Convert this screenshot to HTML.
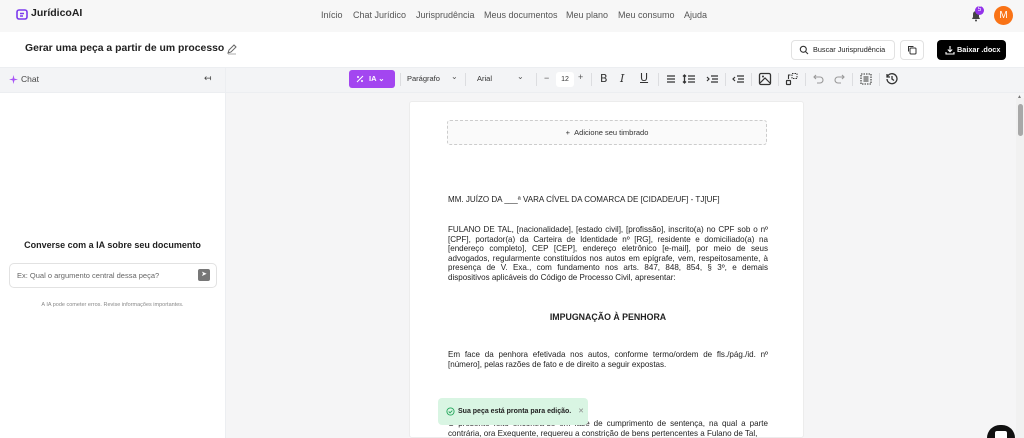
<!DOCTYPE html>
<html><head><meta charset="utf-8"><style>
*{box-sizing:border-box;margin:0;padding:0}
html,body{width:1024px;height:438px;overflow:hidden}
body{font-family:"Liberation Sans",Arial,sans-serif;background:#fff;position:relative;color:#222}
.abs{position:absolute}
.nav{top:0;left:0;width:1024px;height:32px;background:#f7f7f7}
.nav span{position:absolute;top:10px;font-size:9px;color:#555}
.tb{top:67px;left:0;width:1024px;height:26px;background:#f3f4f6;border-top:1px solid #eceef1;border-bottom:1px solid #eceef1}
.ic{position:absolute;top:72px;width:14px;height:14px}
.doc p{font-family:"Liberation Sans",Arial,sans-serif;font-size:8.05px;line-height:9.6px;text-align:justify;color:#222}
.sep{position:absolute;top:73px;width:1px;height:13px;background:#dcdde0}
</style></head><body>
<div class="abs nav"></div>
<svg class="abs" style="left:16px;top:9px" width="12" height="12" viewBox="0 0 12 12"><rect x="1" y="1" width="10" height="9" rx="2" fill="none" stroke="#7c3aed" stroke-width="1.6"/><path d="M4 4.5h4M4 7h3" stroke="#7c3aed" stroke-width="1.4"/></svg>
<div class="abs" style="left:31px;top:7px;font-size:10.5px;font-weight:bold;color:#222">JurídicoAI</div>
<div class="nav abs" style="background:none">
<span style="left:321px">Início</span><span style="left:353px">Chat Jurídico</span><span style="left:416px">Jurisprudência</span><span style="left:484px">Meus documentos</span><span style="left:566px">Meu plano</span><span style="left:618px">Meu consumo</span><span style="left:684px">Ajuda</span></div>
<svg class="abs" style="left:969px;top:8px" width="14" height="14" viewBox="0 0 14 14"><path d="M3 11h8l-1-2V6a3 3 0 0 0-6 0v3z" fill="#444"/><circle cx="7" cy="12.5" r="1" fill="#444"/></svg>
<div class="abs" style="left:975px;top:6px;width:9px;height:9px;border-radius:50%;background:#9333ea;color:#fff;font-size:6px;text-align:center;line-height:9px">5</div>
<div class="abs" style="left:994px;top:6px;width:19px;height:19px;border-radius:50%;background:#f97316;color:#fff;font-size:10px;text-align:center;line-height:19px">M</div>

<div class="abs" style="left:25px;top:43px;font-size:10.4px;font-weight:bold;color:#222">Gerar uma peça a partir de um processo</div>
<svg class="abs" style="left:226px;top:43px" width="12" height="12" viewBox="0 0 12 12"><path d="M2 10l1-3 5-5 2 2-5 5z" fill="none" stroke="#666" stroke-width="1"/><path d="M2 11h8" stroke="#999" stroke-width=".8"/></svg>
<div class="abs" style="left:791px;top:40px;width:104px;height:20px;border:1px solid #e2e2e2;border-radius:4px;font-size:7.3px;line-height:18px;padding-left:21px;color:#222;white-space:nowrap">Buscar Jurisprudência</div>
<svg class="abs" style="left:799px;top:45px" width="10" height="10" viewBox="0 0 10 10"><circle cx="4.3" cy="4.3" r="3" fill="none" stroke="#333" stroke-width="1.1"/><path d="M6.5 6.5L9 9" stroke="#333" stroke-width="1.1"/></svg>
<div class="abs" style="left:900px;top:40px;width:24px;height:20px;border:1px solid #e2e2e2;border-radius:4px"></div>
<svg class="abs" style="left:907px;top:45px" width="10" height="10" viewBox="0 0 10 10"><rect x="3" y="3" width="6" height="6" rx="1" fill="none" stroke="#333"/><path d="M1.5 6.5V1.5h5" fill="none" stroke="#333"/></svg>
<div class="abs" style="left:937px;top:40px;width:69px;height:20px;background:#000;border-radius:4px;color:#fff;font-size:7.3px;font-weight:bold;line-height:20px;padding-left:20px;white-space:nowrap">Baixar .docx</div>
<svg class="abs" style="left:945px;top:45px" width="10" height="10" viewBox="0 0 10 10"><path d="M5 1v5.5M2.8 4.5L5 6.7 7.2 4.5M1 7v2h8V7" fill="none" stroke="#fff" stroke-width="1.1"/></svg>

<div class="abs tb"></div>
<div class="abs" style="left:225px;top:67px;width:1px;height:371px;background:#eceef1"></div>
<svg class="abs" style="left:9px;top:75px" width="9" height="9" viewBox="0 0 10 10"><path d="M5 0L6 4 10 5 6 6 5 10 4 6 0 5 4 4z" fill="#a855f7"/></svg>
<div class="abs" style="left:21px;top:74px;font-size:8.5px;color:#444">Chat</div>
<div class="abs" style="left:204px;top:73px;font-size:9px;color:#444">↤</div>

<div class="abs" style="left:349px;top:70px;width:46px;height:18px;background:#a346f0;border-radius:3px;color:#fff;font-size:7.5px;font-weight:bold;line-height:18px;padding-left:20px">IA ⌄</div>
<svg class="abs" style="left:356px;top:75px" width="8" height="8" viewBox="0 0 8 8"><path d="M1 7l6-6M1 2h2M2 1v2M5 6h2M6 5v2" stroke="#fff" stroke-width="1"/></svg>
<div class="sep" style="left:400px"></div>
<div class="abs" style="left:407px;top:74px;font-size:7.5px;color:#333">Parágrafo</div>
<div class="abs" style="left:451px;top:72px;font-size:8px;color:#555">⌄</div>
<div class="sep" style="left:465px"></div>
<div class="abs" style="left:477px;top:74px;font-size:7.5px;color:#333">Arial</div>
<div class="abs" style="left:517px;top:72px;font-size:8px;color:#555">⌄</div>
<div class="sep" style="left:536px"></div>
<div class="abs" style="left:544px;top:73px;font-size:9px;color:#555">−</div>
<div class="abs" style="left:556px;top:72px;width:18px;height:15px;background:#fff;border-radius:3px;font-size:7px;text-align:center;line-height:15px;color:#333">12</div>
<div class="abs" style="left:578px;top:72px;font-size:9px;color:#555">+</div>
<div class="sep" style="left:591px"></div>
<div class="abs" style="left:600px;top:72px;font-size:11px;color:#333;font-family:'DejaVu Sans'">B</div>
<div class="abs" style="left:620px;top:72px;font-size:11px;color:#333;font-style:italic;font-family:'DejaVu Serif'">I</div>
<div class="abs" style="left:640px;top:71px;font-size:11px;color:#333;text-decoration:underline;font-family:'DejaVu Sans'">U</div>
<div class="sep" style="left:658px"></div>
<svg class="ic" style="left:664px" viewBox="0 0 14 14"><path d="M3 4h8M3 7h8M3 10h8" stroke="#333" stroke-width="1.3"/></svg>
<svg class="ic" style="left:682px" viewBox="0 0 14 14"><path d="M6 4h7M6 7h7M6 10h7M2.5 3v8M1 4.5l1.5-1.5 1.5 1.5M1 9.5l1.5 1.5 1.5-1.5" stroke="#333" stroke-width="1.3" fill="none"/></svg>
<svg class="ic" style="left:705px" viewBox="0 0 14 14"><path d="M6 4h7M7 7h6M6 10h7M2 5l2 2-2 2" stroke="#333" stroke-width="1.2" fill="none"/></svg>
<div class="sep" style="left:725px"></div>
<svg class="ic" style="left:731px" viewBox="0 0 14 14"><path d="M6 4h7M7 7h6M6 10h7M4 5L2 7l2 2" stroke="#333" stroke-width="1.2" fill="none"/></svg>
<div class="sep" style="left:751px"></div>
<svg class="ic" style="left:758px" viewBox="0 0 14 14"><rect x="1.5" y="1.5" width="11" height="11" rx="1.5" fill="none" stroke="#333" stroke-width="1.3"/><path d="M2 11l5-5 5 5" fill="none" stroke="#333" stroke-width="1.2"/><circle cx="5" cy="4.5" r="1" fill="#333"/></svg>
<div class="sep" style="left:778px"></div>
<svg class="ic" style="left:785px" viewBox="0 0 14 14"><rect x="1.5" y="8.5" width="4" height="4" rx=".5" fill="none" stroke="#333" stroke-width="1.2"/><path d="M7 1.5h5v5H7z" fill="none" stroke="#333" stroke-dasharray="1.5 1" stroke-width="1"/><path d="M3.5 7V3h2" fill="none" stroke="#333" stroke-width="1.1"/></svg>
<div class="sep" style="left:805px"></div>
<svg class="ic" style="left:812px" viewBox="0 0 14 14"><path d="M4 3L2 5l2 2M2 5h6a3 3 0 0 1 0 6H5" fill="none" stroke="#999" stroke-width="1.1"/></svg>
<svg class="ic" style="left:832px" viewBox="0 0 14 14"><path d="M10 3l2 2-2 2M12 5H6a3 3 0 0 0 0 6h3" fill="none" stroke="#999" stroke-width="1.1"/></svg>
<div class="sep" style="left:852px"></div>
<svg class="ic" style="left:859px" viewBox="0 0 14 14"><rect x="2" y="2" width="10" height="10" fill="none" stroke="#333" stroke-dasharray="1.5 1" stroke-width="1.1"/><path d="M4.5 5h5M4.5 7h5M4.5 9h5" stroke="#333" stroke-width="1"/></svg>
<div class="sep" style="left:879px"></div>
<svg class="ic" style="left:885px" viewBox="0 0 14 14"><path d="M2.5 4.5A5 5 0 1 1 2 7M2 2v3h3M7 4v3l2 1.5" fill="none" stroke="#333" stroke-width="1.3"/></svg>

<div class="abs" style="left:0;top:240px;width:225px;text-align:center;font-size:9px;font-weight:bold;color:#222">Converse com a IA sobre seu documento</div>
<div class="abs" style="left:9px;top:263px;width:208px;height:25px;border:1px solid #e2e2e2;border-radius:5px;font-size:7.5px;color:#666;line-height:23px;padding-left:7px">Ex: Qual o argumento central dessa peça?</div>
<div class="abs" style="left:198px;top:269px;width:12px;height:12px;background:#777;border-radius:2px;color:#fff;font-size:7px;text-align:center;line-height:12px">➤</div>
<div class="abs" style="left:0;top:302px;width:225px;text-align:center;font-size:5.5px;color:#888">A IA pode cometer erros. Revise informações importantes.</div>

<div class="abs" style="left:226px;top:93px;width:798px;height:345px;background:#f5f5f6"></div>
<div class="abs" style="left:1016px;top:98px;width:8px;height:340px;background:#f1f1f1"></div>
<div class="abs" style="left:1018px;top:104px;width:5px;height:32px;background:#a8a8a8;border-radius:3px"></div>
<div class="abs" style="left:1017px;top:94px;font-size:5px;color:#777">▲</div>

<div class="abs doc" style="left:409px;top:101px;width:395px;height:337px;background:#fff;border:1px solid #ececec;border-radius:3px;overflow:hidden">
<div class="abs" style="left:37px;top:18px;width:320px;height:25px;border:1px dashed #ccc;border-radius:3px;background:#fafafa;font-size:7.5px;color:#333;text-align:center;line-height:23px">+&nbsp;&nbsp;Adicione seu timbrado</div>
<p class="abs" style="left:38px;top:93px;width:320px">MM. JUÍZO DA ___ª VARA CÍVEL DA COMARCA DE [CIDADE/UF] - TJ[UF]</p>
<p class="abs" style="left:38px;top:123px;width:320px">FULANO DE TAL, [nacionalidade], [estado civil], [profissão], inscrito(a) no CPF sob o nº [CPF], portador(a) da Carteira de Identidade nº [RG], residente e domiciliado(a) na [endereço completo], CEP [CEP], endereço eletrônico [e-mail], por meio de seus advogados, regularmente constituídos nos autos em epígrafe, vem, respeitosamente, à presença de V. Exa., com fundamento nos arts. 847, 848, 854, § 3º, e demais dispositivos aplicáveis do Código de Processo Civil, apresentar:</p>
<p class="abs" style="left:38px;top:211px;width:320px;text-align:center;font-weight:bold;font-size:8.8px">IMPUGNAÇÃO À PENHORA</p>
<p class="abs" style="left:38px;top:248px;width:320px">Em face da penhora efetivada nos autos, conforme termo/ordem de fls./pág./id. nº [número], pelas razões de fato e de direito a seguir expostas.</p>
<p class="abs" style="left:38px;top:317px;width:320px">O presente feito encontra-se em fase de cumprimento de sentença, na qual a parte contrária, ora Exequente, requereu a constrição de bens pertencentes a Fulano de Tal,</p>
</div>

<div class="abs" style="left:438px;top:398px;width:150px;height:27px;background:#d9f5e3;border-radius:4px;font-size:7px;font-weight:bold;color:#222;line-height:27px;padding-left:20px;white-space:nowrap">Sua peça está pronta para edição. <span style="color:#888;font-weight:normal;margin-left:5px">✕</span></div>
<svg class="abs" style="left:446px;top:407px" width="9" height="9" viewBox="0 0 10 10"><circle cx="5" cy="5" r="4" fill="none" stroke="#22a55a"/><path d="M3 5l1.5 1.5L7 4" fill="none" stroke="#22a55a"/></svg>
<div class="abs" style="left:987px;top:425px;width:28px;height:13px;border-radius:14px 14px 0 0;background:#111"></div>
<div class="abs" style="left:995px;top:431px;width:12px;height:7px;background:#fff;border-radius:2px 2px 0 0"></div>
</body></html>
